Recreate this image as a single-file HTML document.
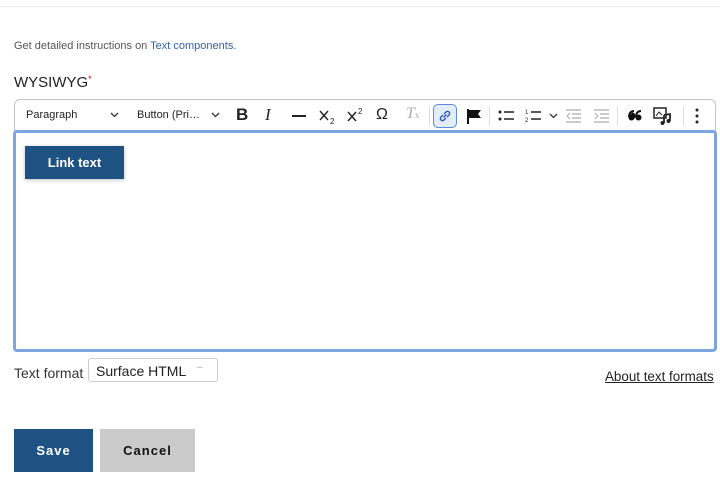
<!DOCTYPE html>
<html><head><meta charset="utf-8"><style>
*{box-sizing:border-box;margin:0;padding:0}
body{width:720px;height:480px;background:#fff;font-family:"Liberation Sans",Arial,sans-serif;position:relative;overflow:hidden;color:#222}
.abs{position:absolute}
.tb{left:14px;top:99px;width:702px;height:32px;border:1px solid #c4c4c4;border-bottom:none;border-radius:6px 6px 0 0;background:#fff}
.ed{left:13px;top:130px;width:704px;height:222px;border:3px solid #7da5e0;border-radius:4px;background:#fff}
.t{position:absolute;font-size:11px;color:#222;top:9px}
.ic{position:absolute;top:6px}
.sep{position:absolute;top:6px;width:1px;height:20px;background:#ddd}
</style></head><body>
<div class="abs" style="left:0;top:6px;width:720px;height:1px;background:#ececec"></div>
<div class="abs" style="left:14px;top:40px;font-size:11px;color:#555">Get detailed instructions on <span style="color:#2f5fb3">Text components.</span></div>
<div class="abs" style="left:14px;top:74px;font-size:15px;color:#222">WYSIWYG<span style="color:#c00;font-size:9px;vertical-align:top">*</span></div>
<div class="abs tb">
<span class="t" style="left:11px">Paragraph</span>
<svg class="ic" style="left:95px;top:12px" width="9" height="6"><path d="M1 1l3.5 3.5L8 1" stroke="#333" fill="none" stroke-width="1.3"/></svg>
<span class="t" style="left:122px">Button (Pri…</span>
<svg class="ic" style="left:196px;top:12px" width="9" height="6"><path d="M1 1l3.5 3.5L8 1" stroke="#333" fill="none" stroke-width="1.3"/></svg>
<span class="t" style="left:221px;top:5px;font-size:17px;font-weight:bold">B</span>
<span class="t" style="left:250px;top:5px;font-size:17px;font-style:italic;font-family:'Liberation Serif',serif">I</span>
<div class="abs" style="left:277px;top:15px;width:14px;height:2px;background:#222"></div>
<svg class="ic" style="left:304px;top:7px" width="18" height="18"><path d="M1 4l8 9M9 4l-8 9" stroke="#222" stroke-width="1.4"/><text x="11" y="17" font-size="8" fill="#222" font-family="Liberation Sans">2</text></svg>
<svg class="ic" style="left:332px;top:6px" width="18" height="18"><path d="M1 6l8 9M9 6l-8 9" stroke="#222" stroke-width="1.4"/><text x="11" y="8" font-size="8" fill="#222" font-family="Liberation Sans">2</text></svg>
<span class="t" style="left:361px;top:6px;font-size:16px">Ω</span>
<span class="t" style="left:391px;top:5px;font-size:16px;color:#aaa;font-style:italic;font-family:'Liberation Serif',serif">T<span style="font-size:9px;font-style:normal">x</span></span>
<div class="sep" style="left:414px"></div>
<div class="abs" style="left:418px;top:4px;width:24px;height:24px;border:1px solid #5b8ae0;border-radius:5px;background:#e2ecfb"></div>
<svg class="ic" style="left:423px;top:9px" width="14" height="14"><path d="M5.5 8.5l3-3M5 6L3 8a2.1 2.1 0 0 0 3 3l2-2M9 8l2-2a2.1 2.1 0 0 0-3-3L6 5" stroke="#2b5bb8" fill="none" stroke-width="1.4"/></svg>
<svg class="ic" style="left:451px;top:8px" width="16" height="16"><path d="M2 1v15" stroke="#111" stroke-width="2"/><path d="M3 2h12l-3 4 3 4H3z" fill="#111"/></svg>
<div class="sep" style="left:474px"></div>
<svg class="ic" style="left:483px;top:9px" width="16" height="14"><circle cx="2" cy="3" r="1.5" fill="#222"/><circle cx="2" cy="10" r="1.5" fill="#222"/><path d="M6 3h10M6 10h10" stroke="#222" stroke-width="1.5"/></svg>
<svg class="ic" style="left:510px;top:8px" width="16" height="16"><text x="0" y="6" font-size="6" fill="#222">1</text><text x="0" y="14" font-size="6" fill="#222">2</text><path d="M6 4h10M6 11h10" stroke="#222" stroke-width="1.5"/></svg>
<svg class="ic" style="left:534px;top:13px" width="9" height="6"><path d="M1 1l3.5 3.5L8 1" stroke="#333" fill="none" stroke-width="1.3"/></svg>
<svg class="ic" style="left:550px;top:9px" width="16" height="14"><path d="M1 1h15M7 5h9M7 9h9M1 13h15" stroke="#aaa" stroke-width="1.2"/><path d="M5 4L2 7l3 3" stroke="#aaa" fill="none"/></svg>
<svg class="ic" style="left:578px;top:9px" width="16" height="14"><path d="M1 1h15M7 5h9M7 9h9M1 13h15" stroke="#aaa" stroke-width="1.2"/><path d="M2 4l3 3-3 3" stroke="#aaa" fill="none"/></svg>
<div class="sep" style="left:602px"></div>
<svg class="ic" style="left:613px;top:10px" width="14" height="12"><path d="M1 6a3 3 0 1 0 3-3c0-1 1-2 2-2M1 6c0-3 2-5 4-5" fill="#111" stroke="#111" stroke-width="1"/><circle cx="3.5" cy="7.5" r="3" fill="#111"/><circle cx="10.5" cy="7.5" r="3" fill="#111"/><path d="M1 7c0-4 2-6 5-6M8 7c0-4 2-6 5-6" stroke="#111" stroke-width="2" fill="none"/></svg>
<svg class="ic" style="left:638px;top:7px" width="18" height="18"><rect x="1" y="1" width="12" height="10" fill="none" stroke="#222" stroke-width="1.5"/><path d="M3 9l3-4 3 3" stroke="#222" fill="none"/><path d="M11 8v8M11 8l6-1v7" stroke="#222" stroke-width="1.8" fill="none"/><circle cx="9.5" cy="16" r="2" fill="#222"/><circle cx="15.5" cy="14" r="2" fill="#222"/></svg>
<div class="sep" style="left:668px"></div>
<svg class="ic" style="left:680px;top:8px" width="4" height="16"><circle cx="2" cy="2" r="1.5" fill="#222"/><circle cx="2" cy="8" r="1.5" fill="#222"/><circle cx="2" cy="14" r="1.5" fill="#222"/></svg>
</div>
<div class="abs ed"></div>
<div class="abs" style="left:25px;top:146px;width:99px;height:33px;background:#1d5283;box-shadow:0 1px 4px rgba(0,0,0,.25);color:#fff;font-weight:bold;font-size:13px;text-align:center;line-height:33px">Link text</div>
<div class="abs" style="left:14px;top:365px;font-size:14px;color:#333">Text format</div>
<div class="abs" style="left:88px;top:358px;width:130px;height:24px;border:1px solid #ccc;border-radius:3px;font-size:14px;padding:4px 0 0 7px;color:#222">Surface HTML<span style="position:absolute;left:108px;top:3px;color:#aaa;font-size:10px">–</span></div>
<div class="abs" style="left:605px;top:369px;font-size:13.4px;color:#222;text-decoration:underline">About text formats</div>
<div class="abs" style="left:14px;top:429px;width:79px;height:43px;background:#1d5283;color:#fff;font-weight:bold;font-size:13px;letter-spacing:1px;text-align:center;line-height:43px">Save</div>
<div class="abs" style="left:100px;top:429px;width:95px;height:43px;background:#cbcbcb;color:#111;font-weight:bold;font-size:13px;letter-spacing:1px;text-align:center;line-height:43px">Cancel</div>
</body></html>
